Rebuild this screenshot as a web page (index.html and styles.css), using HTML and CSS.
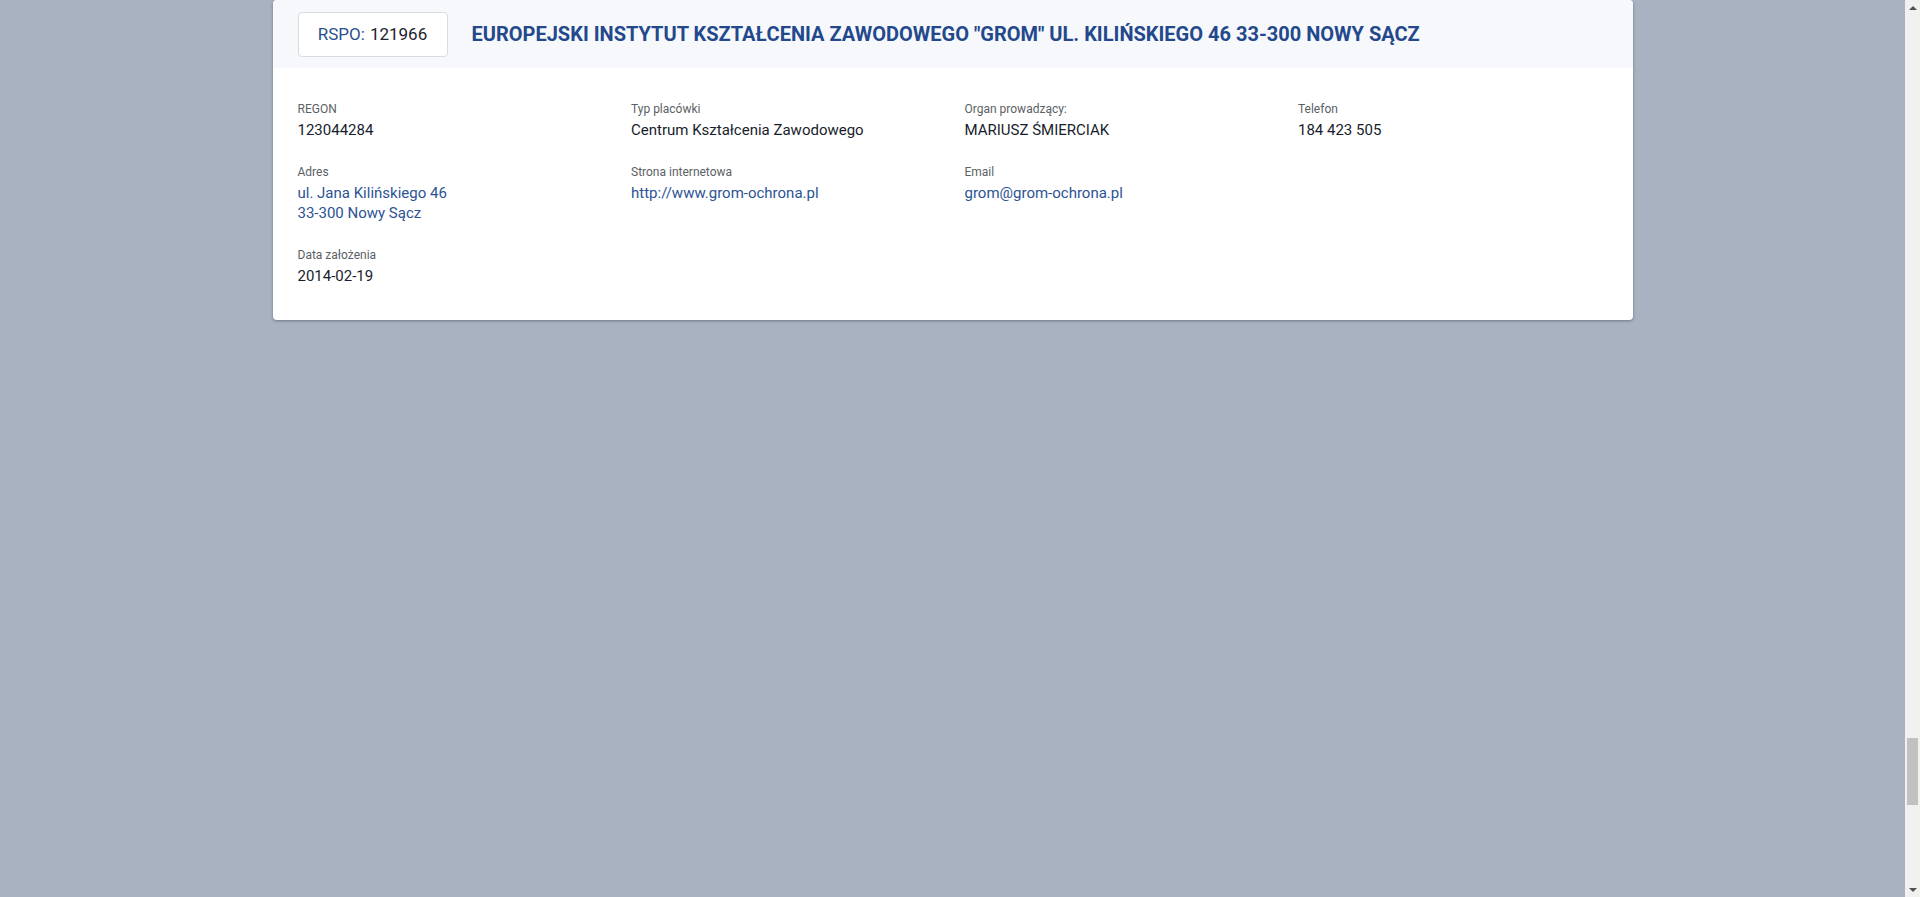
FILE: index.html
```html
<!DOCTYPE html>
<html lang="pl">
<head>
<meta charset="utf-8">
<title>RSPO 121966</title>
<link rel="stylesheet" href="styles.css">
</head>
<body>
<div class="page">
  <main class="main">
    <section class="card">
      <header class="card-head">
        <div class="rspo"><span class="rspo-label">RSPO:</span> <span class="rspo-num">121966</span></div>
        <h1 class="title">EUROPEJSKI INSTYTUT KSZTAŁCENIA ZAWODOWEGO "GROM" UL. KILIŃSKIEGO 46 33-300 NOWY SĄCZ</h1>
      </header>
      <div class="card-body">
        <div class="field"><div class="label">REGON</div><div class="value">123044284</div></div>
        <div class="field"><div class="label">Typ placówki</div><div class="value">Centrum Kształcenia Zawodowego</div></div>
        <div class="field"><div class="label">Organ prowadzący:</div><div class="value">MARIUSZ ŚMIERCIAK</div></div>
        <div class="field"><div class="label">Telefon</div><div class="value">184 423 505</div></div>

        <div class="field"><div class="label">Adres</div><div class="value link">ul. Jana Kilińskiego 46<br>33-300 Nowy Sącz</div></div>
        <div class="field"><div class="label">Strona internetowa</div><div class="value link">http://www.grom-ochrona.pl</div></div>
        <div class="field"><div class="label">Email</div><div class="value link">grom@grom-ochrona.pl</div></div>
        <div class="field"></div>

        <div class="field"><div class="label">Data założenia</div><div class="value">2014-02-19</div></div>
      </div>
    </section>
  </main>
  <div class="scrollbar">
    <div class="sb-btn"><span class="tri-up"></span></div>
    <div class="sb-track"><div class="sb-thumb"></div></div>
    <div class="sb-btn"><span class="tri-down"></span></div>
  </div>
</div>
</body>
</html>
```

FILE: styles.css
```css
html, body {
  margin: 0;
  padding: 0;
  height: 100%;
}
body {
  background: #a8b2c1;
  font-family: Roboto, "Liberation Sans", sans-serif;
  overflow: hidden;
}
.page {
  display: flex;
  height: 897px;
}
.main {
  flex: 1;
  display: flex;
  justify-content: center;
  align-items: flex-start;
}
.card {
  width: 1360px;
  background: #ffffff;
  border-radius: 4px;
  box-shadow: 0 1px 3px rgba(40, 50, 70, 0.45);
  overflow: hidden;
}
.card-head {
  display: flex;
  align-items: center;
  gap: 24px;
  background: #f6f8fb;
  padding: 12px 25px;
  height: 44px;
}
.rspo {
  box-sizing: border-box;
  height: 45px;
  width: 150px;
  display: flex;
  align-items: center;
  justify-content: center;
  gap: 5px;
  background: #fff;
  border: 1px solid #d8dce3;
  border-radius: 4px;
  font-size: 17px;
  color: #1d2330;
}
.rspo-label {
  color: #2a4f8e;
}
.title {
  margin: 0;
  font-size: 20px;
  font-weight: 700;
  color: #23488c;
  letter-spacing: 0;
}
.card-body {
  display: grid;
  grid-template-columns: repeat(4, 1fr);
  column-gap: 24px;
  row-gap: 24px;
  padding: 33px 25px 34px;
}
.label {
  font-size: 12px;
  line-height: 16px;
  color: #5b5f66;
  margin-bottom: 3px;
}
.value {
  font-size: 15px;
  line-height: 20px;
  color: #171d2c;
}
.value.link {
  color: #2c5394;
}
.scrollbar {
  width: 15px;
  background: #f1f1f1;
  display: flex;
  flex-direction: column;
}
.sb-btn {
  height: 15px;
  display: flex;
  align-items: center;
  justify-content: center;
}
.tri-up {
  width: 0;
  height: 0;
  border-left: 4px solid transparent;
  border-right: 4px solid transparent;
  border-bottom: 4px solid #505050;
}
.tri-down {
  width: 0;
  height: 0;
  border-left: 4px solid transparent;
  border-right: 4px solid transparent;
  border-top: 4px solid #505050;
}
.sb-track {
  flex: 1;
  padding: 0 2px;
}
.sb-thumb {
  margin-top: 723px;
  height: 67px;
  background: #c1c1c1;
}
```
